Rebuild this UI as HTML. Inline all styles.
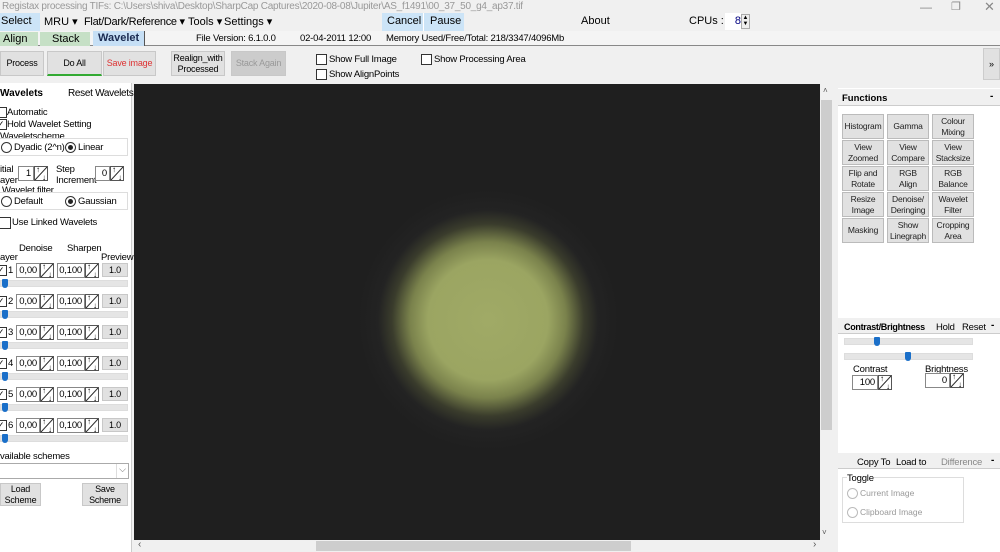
<!DOCTYPE html>
<html><head><meta charset="utf-8"><style>
*{box-sizing:border-box;margin:0;padding:0}
body{width:1000px;height:552px;overflow:hidden;background:#f0f0f0;font-family:"Liberation Sans",sans-serif;font-size:10px;color:#000;position:relative}
.a{position:absolute;white-space:nowrap}
.btn{position:absolute;background:#e1e1e1;border:1px solid #c8c8c8;text-align:center;font-size:9px;display:flex;align-items:center;justify-content:center;line-height:11px;letter-spacing:-0.2px}
.cb{position:absolute;width:11px;height:11px;border:1px solid #333;background:#fff}
.rb{position:absolute;width:11px;height:11px;border:1px solid #333;border-radius:50%;background:#fff}
.rb.on::after{content:"";position:absolute;left:2px;top:2px;width:5px;height:5px;border-radius:50%;background:#222}
.fld{position:absolute;height:15px;border:1px solid #888;background:#fff;font-size:9.5px;text-align:right;padding-right:2px;line-height:13px;letter-spacing:-0.2px}
.sp{position:absolute;width:14px;height:15px;border:1px solid #555;background:linear-gradient(to top left,#fff 46%,#333 48%,#333 52%,#fff 54%)}
.sp::before{content:"↑";position:absolute;left:1px;top:-2px;font-size:8px;font-weight:bold}
.sp::after{content:"↓";position:absolute;right:1px;bottom:-2px;font-size:8px;font-weight:bold}
.trk{position:absolute;height:7px;background:#e5e5e5;border:1px solid #ddd}
.th{position:absolute;width:6px;height:9px;background:#1a6fc9;border-radius:1px 1px 3px 3px}
.fb{position:absolute;width:42px;height:25px;background:#e1e1e1;border:1px solid #bbb;font-size:8.5px;text-align:center;display:flex;align-items:center;justify-content:center;line-height:11px;color:#222;letter-spacing:-0.2px}
.t{font-size:9.5px;letter-spacing:-0.2px}
</style></head><body>
<div class="a" style="left:2px;top:1px;color:#999;font-size:10px;letter-spacing:-0.25px">Registax processing TIFs: C:\Users\shiva\Desktop\SharpCap Captures\2020-08-08\Jupiter\AS_f1491\00_37_50_g4_ap37.tif</div>
<div class="a" style="left:920px;top:0;color:#888;font-size:12px">—</div>
<div class="a" style="left:951px;top:0;color:#888;font-size:11px">❐</div>
<div class="a" style="left:984px;top:-1px;color:#888;font-size:13px">✕</div>
<div class="a" style="left:0;top:13px;width:40px;height:18px;background:#cce4f7"></div>
<div class="a" style="left:1px;top:15px;font-size:11px">Select</div>
<div class="a" style="left:44px;top:15px;font-size:11px">MRU ▾</div>
<div class="a" style="left:84px;top:15px;font-size:11px;letter-spacing:-0.3px">Flat/Dark/Reference ▾</div>
<div class="a" style="left:188px;top:15px;font-size:11px">Tools ▾</div>
<div class="a" style="left:224px;top:15px;font-size:11px">Settings ▾</div>
<div class="a" style="left:382px;top:13px;width:82px;height:18px;background:#cce4f7"></div>
<div class="a" style="left:423px;top:13px;width:1px;height:18px;background:#fff"></div>
<div class="a" style="left:387px;top:15px;font-size:11px">Cancel</div>
<div class="a" style="left:430px;top:15px;font-size:11px">Pause</div>
<div class="a" style="left:581px;top:15px;font-size:11px">About</div>
<div class="a" style="left:689px;top:15px;font-size:11px">CPUs :</div>
<div class="a" style="left:725px;top:13px;width:16px;height:17px;background:#fff;color:#000080;font-size:11px;text-align:right;padding-top:2px">8</div>
<div class="a" style="left:741px;top:14px;width:9px;height:15px;border:1px solid #aaa;background:#eee;font-size:6px;line-height:6px;text-align:center">▲<br>▼</div>
<div class="a" style="left:0;top:31px;width:1000px;height:15px;background:#f4f4f4;border-bottom:1px solid #888"></div>
<div class="a" style="left:0;top:32px;width:38px;height:14px;background:#c6e0c6"></div>
<div class="a" style="left:40px;top:32px;width:50px;height:14px;background:#c6e0c6"></div>
<div class="a" style="left:93px;top:31px;width:52px;height:15px;background:#c6dff5;border-right:1px solid #555"></div>
<div class="a" style="left:3px;top:33px;font-size:11px">Align</div>
<div class="a" style="left:52px;top:33px;font-size:11px">Stack</div>
<div class="a" style="left:98px;top:32px;font-size:11px;font-weight:bold;color:#1a2a50">Wavelet</div>
<div class="a t" style="left:196px;top:33px">File Version: 6.1.0.0</div>
<div class="a t" style="left:300px;top:33px">02-04-2011 12:00</div>
<div class="a t" style="left:386px;top:33px">Memory Used/Free/Total: 218/3347/4096Mb</div>
<div class="btn" style="left:0;top:51px;width:44px;height:25px">Process</div>
<div class="btn" style="left:47px;top:51px;width:55px;height:25px;border-bottom:2px solid #3a3">Do All</div>
<div class="btn" style="left:103px;top:51px;width:53px;height:25px;color:#d33">Save image</div>
<div class="btn" style="left:171px;top:51px;width:54px;height:25px">Realign_with<br>Processed</div>
<div class="btn" style="left:231px;top:51px;width:55px;height:25px;background:#ccc;color:#999">Stack Again</div>
<div class="cb" style="left:316px;top:54px"></div><div class="a t" style="left:329px;top:54px">Show Full Image</div>
<div class="cb" style="left:316px;top:69px"></div><div class="a t" style="left:329px;top:69px">Show AlignPoints</div>
<div class="cb" style="left:421px;top:54px"></div><div class="a t" style="left:434px;top:54px">Show Processing Area</div>
<div class="a" style="left:983px;top:48px;width:17px;height:32px;background:#e1e1e1;border:1px solid #ccc;font-size:9px;padding-top:10px;text-align:center">»</div>
<div class="a" style="left:0;top:83px;width:132px;height:469px;background:#fff;border-right:1px solid #ccc"></div>
<div class="a" style="left:0;top:88px;font-weight:bold;font-size:10px">Wavelets</div>
<div class="a" style="left:68px;top:88px;font-size:10px;letter-spacing:-0.3px">Reset Wavelets</div>
<div class="cb" style="left:-4px;top:107px"></div><div class="a t" style="left:7px;top:107px">Automatic</div>
<div class="cb" style="left:-4px;top:119px;font-size:9px;line-height:9px">✓</div><div class="a t" style="left:7px;top:119px">Hold Wavelet Setting</div>
<div class="a t" style="left:0;top:131px">Waveletscheme</div>
<div class="a" style="left:-2px;top:138px;width:130px;height:18px;border:1px solid #ddd"></div>
<div class="rb" style="left:1px;top:142px"></div><div class="a t" style="left:14px;top:142px">Dyadic (2^n)</div>
<div class="rb on" style="left:65px;top:142px"></div><div class="a t" style="left:78px;top:142px">Linear</div>
<div class="a t" style="left:0;top:164px;line-height:11px">itial<br>ayer</div>
<div class="fld" style="left:18px;top:166px;width:16px">1</div><div class="sp" style="left:34px;top:166px"></div>
<div class="a t" style="left:56px;top:164px;line-height:11px">Step<br>Increment</div>
<div class="fld" style="left:95px;top:166px;width:15px">0</div><div class="sp" style="left:110px;top:166px"></div>
<div class="a t" style="left:2px;top:185px">Wavelet filter</div>
<div class="a" style="left:-2px;top:192px;width:130px;height:18px;border:1px solid #ddd"></div>
<div class="rb" style="left:1px;top:196px"></div><div class="a t" style="left:14px;top:196px">Default</div>
<div class="rb on" style="left:65px;top:196px"></div><div class="a t" style="left:78px;top:196px">Gaussian</div>
<div class="cb" style="left:-1px;top:217px;width:12px;height:12px"></div><div class="a t" style="left:12px;top:217px">Use Linked Wavelets</div>
<div class="a t" style="left:19px;top:243px">Denoise</div>
<div class="a t" style="left:67px;top:243px">Sharpen</div>
<div class="a t" style="left:0;top:252px">ayer</div>
<div class="a t" style="left:101px;top:252px">Preview</div>
<div id="rows"></div>
<div class="a t" style="left:0;top:451px">vailable schemes</div>
<div class="a" style="left:-1px;top:463px;width:130px;height:16px;border:1px solid #aaa;background:#fff"></div>
<div class="a" style="left:116px;top:464px;width:12px;height:14px;border-left:1px solid #ddd;font-size:9px;color:#666;text-align:center">⌵</div>
<div class="btn" style="left:0;top:483px;width:41px;height:23px">Load<br>Scheme</div>
<div class="btn" style="left:82px;top:483px;width:46px;height:23px">Save<br>Scheme</div>
<div class="a" style="left:134px;top:84px;width:686px;height:456px;background:radial-gradient(circle at 354px 236px,#a0aa66 0,#9ba562 60px,#7a824c 78px,#3a3c2c 96px,#232323 110px,#1f1f1f 130px)"></div>
<div class="a" style="left:820px;top:84px;width:14px;height:456px;background:#f0f0f0"></div>
<div class="a" style="left:821px;top:100px;width:11px;height:330px;background:#cdcdcd"></div>
<div class="a" style="left:823px;top:86px;font-size:8px;color:#555">˄</div>
<div class="a" style="left:822px;top:528px;font-size:8px;color:#555">˅</div>
<div class="a" style="left:134px;top:540px;width:686px;height:12px;background:#f0f0f0"></div>
<div class="a" style="left:316px;top:541px;width:315px;height:10px;background:#cdcdcd"></div>
<div class="a" style="left:138px;top:539px;font-size:10px;color:#555">‹</div>
<div class="a" style="left:813px;top:539px;font-size:10px;color:#555">›</div>
<div class="a" style="left:838px;top:88px;width:162px;height:464px;background:#fff"></div>
<div class="a" style="left:838px;top:89px;width:162px;height:17px;background:#f0f0f0;border-bottom:1px solid #ccc"></div>
<div class="a" style="left:842px;top:93px;font-weight:bold;font-size:9.5px">Functions</div>
<div class="a" style="left:990px;top:91px;font-weight:bold">-</div>
<div id="funcs"></div>
<div class="a" style="left:838px;top:318px;width:162px;height:16px;background:#f0f0f0;border-bottom:1px solid #ccc"></div>
<div class="a" style="left:844px;top:322px;font-weight:bold;font-size:9px;letter-spacing:-0.3px">Contrast/Brightness</div>
<div class="a t" style="left:936px;top:322px">Hold</div>
<div class="a t" style="left:962px;top:322px">Reset</div>
<div class="a" style="left:991px;top:320px;font-weight:bold">-</div>
<div class="trk" style="left:844px;top:338px;width:129px"></div><div class="th" style="left:874px;top:337px"></div>
<div class="trk" style="left:844px;top:353px;width:129px"></div><div class="th" style="left:905px;top:352px"></div>
<div class="a t" style="left:853px;top:364px">Contrast</div>
<div class="a t" style="left:925px;top:364px">Brightness</div>
<div class="fld" style="left:852px;top:375px;width:26px">100</div><div class="sp" style="left:878px;top:375px"></div>
<div class="fld" style="left:925px;top:373px;width:25px">0</div><div class="sp" style="left:950px;top:373px"></div>
<div class="a" style="left:838px;top:453px;width:162px;height:16px;background:#f0f0f0;border-bottom:1px solid #ccc"></div>
<div class="a t" style="left:857px;top:457px">Copy To</div>
<div class="a t" style="left:896px;top:457px">Load to</div>
<div class="a t" style="left:941px;top:457px;color:#888">Difference</div>
<div class="a" style="left:991px;top:455px;font-weight:bold">-</div>
<div class="a" style="left:842px;top:477px;width:122px;height:46px;border:1px solid #ddd"></div>
<div class="a t" style="left:847px;top:473px;background:#fff">Toggle</div>
<div class="rb" style="left:847px;top:488px;border-color:#bbb"></div><div class="a" style="left:860px;top:488px;font-size:8.5px;color:#999">Current Image</div>
<div class="rb" style="left:847px;top:507px;border-color:#bbb"></div><div class="a" style="left:860px;top:507px;font-size:8.5px;color:#999">Clipboard Image</div>
<script>
var h='';
for(var i=0;i<6;i++){var y=263+i*31;
h+='<div class="cb" style="left:-4px;top:'+(y+2)+'px;font-size:9px;line-height:9px">✓</div><div class="a t" style="left:8px;top:'+(y+2)+'px">'+(i+1)+'</div>';
h+='<div class="fld" style="left:16px;top:'+y+'px;width:24px">0,00</div><div class="sp" style="left:40px;top:'+y+'px"></div>';
h+='<div class="fld" style="left:57px;top:'+y+'px;width:28px">0,100</div><div class="sp" style="left:85px;top:'+y+'px"></div>';
h+='<div class="btn" style="left:102px;top:'+y+'px;width:26px;height:14px">1.0</div>';
h+='<div class="trk" style="left:0;top:'+(y+17)+'px;width:128px"></div><div class="th" style="left:2px;top:'+(y+16)+'px"></div>';}
document.getElementById('rows').innerHTML=h;
var f=[["Histogram","Gamma","Colour<br>Mixing"],["View<br>Zoomed","View<br>Compare","View<br>Stacksize"],["Flip and<br>Rotate","RGB<br>Align","RGB<br>Balance"],["Resize<br>Image","Denoise/<br>Deringing","Wavelet<br>Filter"],["Masking","Show<br>Linegraph","Cropping<br>Area"]];
var g='';
for(var r=0;r<5;r++)for(var c=0;c<3;c++){g+='<div class="fb" style="left:'+(842+c*45)+'px;top:'+(114+r*26)+'px">'+f[r][c]+'</div>';}
document.getElementById('funcs').innerHTML=g;
</script>
</body></html>
